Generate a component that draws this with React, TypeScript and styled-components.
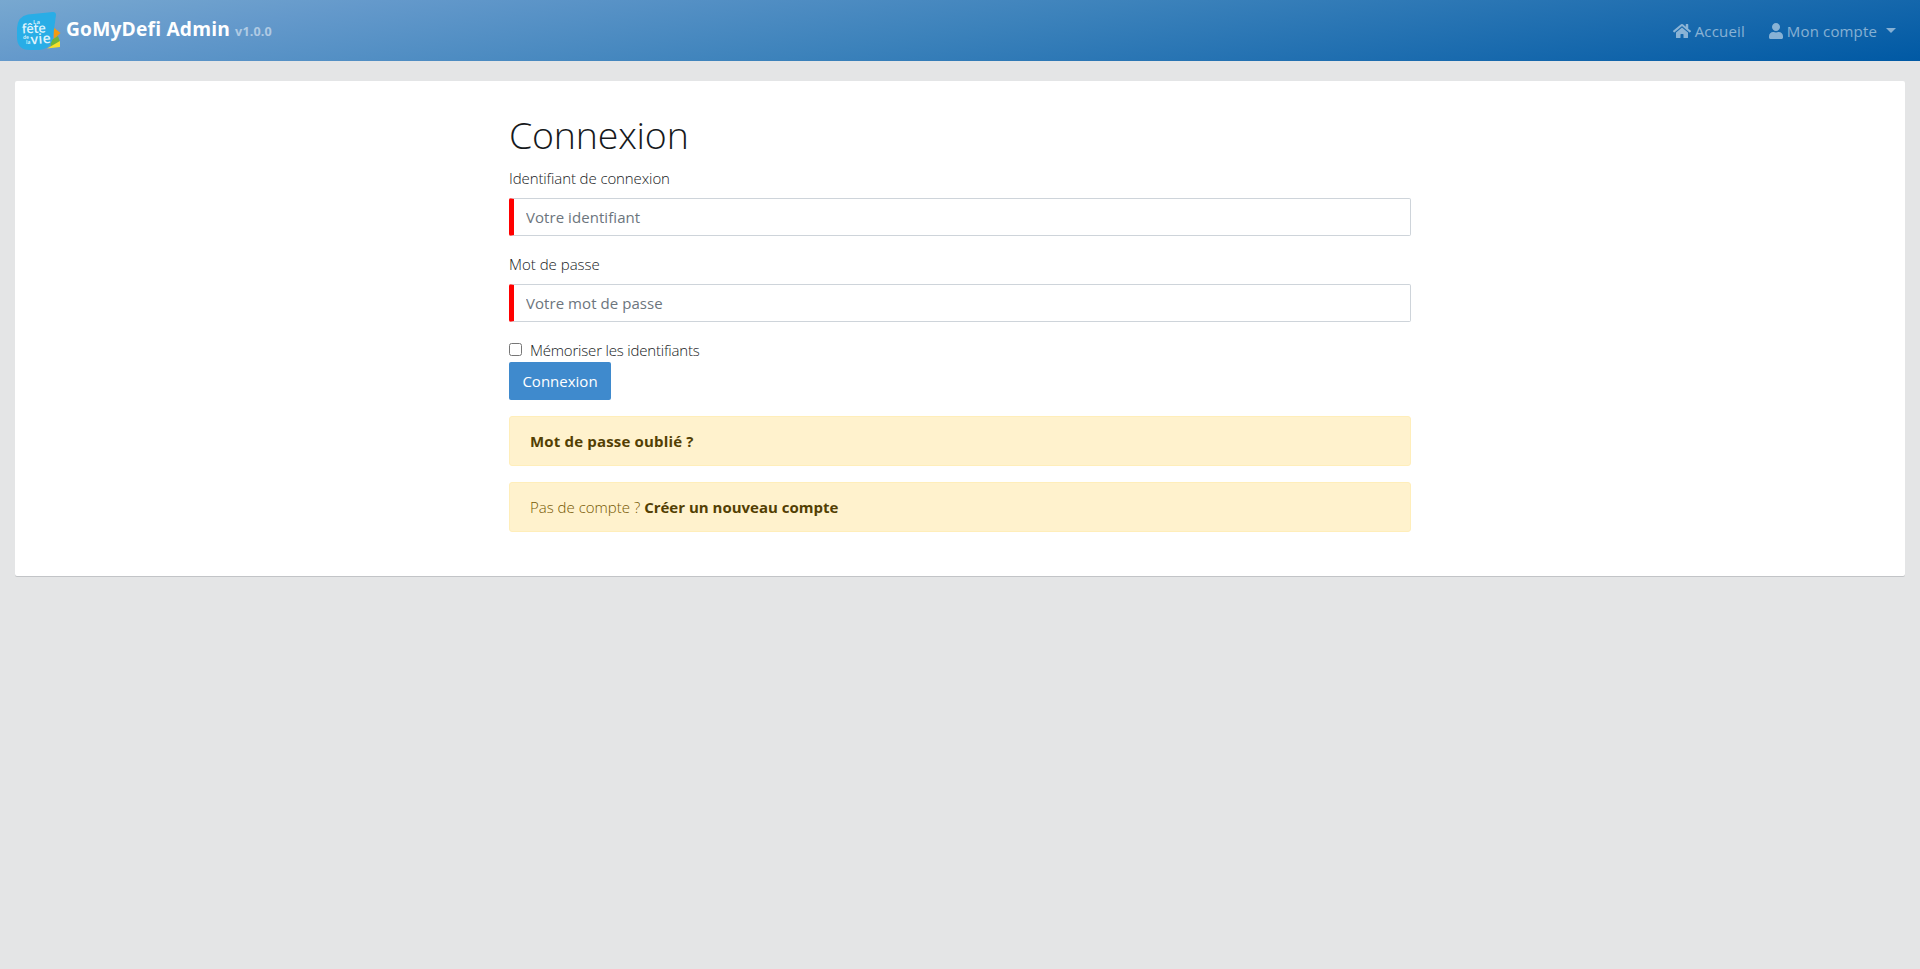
import React from "react";
import styled, { createGlobalStyle } from "styled-components";
import { FaHome, FaUser } from "react-icons/fa";

const GlobalStyle = createGlobalStyle`
  *, *::before, *::after { box-sizing: border-box; }
  body {
    margin: 0;
    min-height: 969px;
    background: #e4e5e6;
    color: #16191c;
    font-family: "Open Sans", "Noto Sans", sans-serif;
    font-size: 15px;
    font-weight: 300;
    line-height: 24px;
  }
`;

const Text = styled.span<{ $ls?: number }>`
  letter-spacing: ${(p) => p.$ls ?? 0}px;
  white-space: nowrap;
`;

const Navbar = styled.nav`
  display: flex;
  align-items: center;
  justify-content: space-between;
  height: 61px;
  padding: 0 24px 0 16px;
  background: linear-gradient(171deg, #78a8d0, #6499cb 17%, #3c82bb 50%, #0059a4);
`;

const Brand = styled.a`
  display: flex;
  align-items: center;
  color: #fff;
  font-size: 19.2px;
  font-weight: 700;
`;

const Logo = styled.svg`
  width: 45px;
  height: 40px;
  margin-right: 5px;
`;

const BrandText = styled.div`
  display: flex;
  align-items: baseline;
  gap: 5px;
`;

const Version = styled.small`
  color: rgba(255, 255, 255, 0.5);
  font-size: 12.6px;
  letter-spacing: 0.15px;
`;

const NavLinks = styled.div`
  display: flex;
  align-items: center;
  gap: 24px;
`;

const NavLink = styled.a`
  display: flex;
  align-items: center;
  color: rgba(255, 255, 255, 0.5);
  font-weight: 400;
`;

const HomeIcon = styled(FaHome)`
  width: 18px;
  height: 18px;
  margin-right: 4px;
`;

const UserIcon = styled(FaUser)`
  width: 14px;
  height: 16px;
  margin-right: 4px;
`;

const Caret = styled.span`
  margin: -1px 0 0 9px;
  border-top: 5px solid;
  border-left: 5px solid transparent;
  border-right: 5px solid transparent;
`;

const Card = styled.main`
  margin: 20px 15px 0;
  height: 495px;
  padding-top: 29px;
  border-radius: 2px;
  background: #fff;
  box-shadow: 0 1px 0 #c2c4c7;
`;

const Form = styled.form`
  width: 902px;
  margin: 0 auto;
`;

const Title = styled.h1`
  height: 48px;
  margin: 0 0 8px;
  padding-top: 1px;
  font-size: 37.5px;
  font-weight: 300;
  line-height: 48px;
`;

const Label = styled.label`
  display: block;
  margin-bottom: 8px;
`;

const Input = styled.input`
  display: block;
  width: 100%;
  height: 38px;
  margin-bottom: 16px;
  padding: 6px 12px;
  border: 1px solid #ced4da;
  border-left: 5px solid red;
  border-radius: 2px;
  background: #fff;
  font: 400 15px/24px "Open Sans", "Noto Sans", sans-serif;
  letter-spacing: 0.06px;

  &::placeholder { color: #6c757d; opacity: 1; }
`;

const Remember = styled.label`
  display: flex;
  align-items: center;
  height: 24px;
`;

const Checkbox = styled.input`
  width: 13px;
  height: 13px;
  margin: 0 8px 2px 0;
`;

const Submit = styled.button`
  display: block;
  width: 102px;
  height: 38px;
  margin-bottom: 16px;
  padding: 0;
  border: 0;
  border-radius: 2px;
  background: #3f8acd;
  color: #fff;
  font: 400 15px/24px "Open Sans", "Noto Sans", sans-serif;
`;

const Alert = styled.div`
  height: 50px;
  margin-bottom: 16px;
  padding: 12px 20px;
  border: 1px solid #ffeeba;
  border-radius: 3px;
  background: #fff2cd;
  color: #745600;
`;

const AlertLink = styled.a`
  color: #533f03;
  font-weight: 700;
`;

function LogoMark() {
  return (
    <Logo viewBox="0 0 45 40">
      <path d="M37 16l7.500 6-6.500 6z" fill="#f39a12" />
      <path d="M34 30l8-5 2 6-9 5z" fill="#6fb43c" />
      <path d="M31 37.500l13-7.500v6z" fill="#f7e02c" />
      <path d="M12 3.500L37 1q3 0 3 3l-3 22q-2 12-14 13H14Q1 39 1 26V17Q2 5 12 3.500z" fill="#29ade6" />
      <g fill="#dff3fc" fontFamily="Open Sans, sans-serif" fontWeight="600">
        <text x="17" y="12.500" fontSize="6" textLength="7">La</text>
        <text x="6" y="22.500" fontSize="13" textLength="24" transform="rotate(-3 6 22)">fête</text>
        <text x="7" y="28" fontSize="5">de</text>
        <text x="10" y="33" fontSize="5">la</text>
        <text x="15" y="33.500" fontSize="14" textLength="20" transform="rotate(-5 15 33)">vie</text>
      </g>
    </Logo>
  );
}

export default function App() {
  return (
    <>
      <GlobalStyle />
      <Navbar>
        <Brand>
          <LogoMark />
          <BrandText>
            <Text $ls={0.2}>GoMyDefi Admin</Text>
            <Version>v1.0.0</Version>
          </BrandText>
        </Brand>
        <NavLinks>
          <NavLink>
            <HomeIcon />
            <Text $ls={0.15}>Accueil</Text>
          </NavLink>
          <NavLink>
            <UserIcon />
            <Text $ls={0.15}>Mon compte</Text>
            <Caret />
          </NavLink>
        </NavLinks>
      </Navbar>
      <Card>
        <Form>
          <Title><Text $ls={-0.2}>Connexion</Text></Title>
          <Label><Text $ls={-0.1}>Identifiant de connexion</Text></Label>
          <Input placeholder="Votre identifiant" />
          <Label><Text>Mot de passe</Text></Label>
          <Input type="password" placeholder="Votre mot de passe" />
          <Remember>
            <Checkbox type="checkbox" />
            <Text $ls={-0.19}>Mémoriser les identifiants</Text>
          </Remember>
          <Submit type="button"><Text>Connexion</Text></Submit>
          <Alert><AlertLink><Text $ls={0.17}>Mot de passe oublié ?</Text></AlertLink></Alert>
          <Alert>
            <Text>Pas de compte ? </Text>
            <AlertLink><Text>Créer un nouveau compte</Text></AlertLink>
          </Alert>
        </Form>
      </Card>
    </>
  );
}
